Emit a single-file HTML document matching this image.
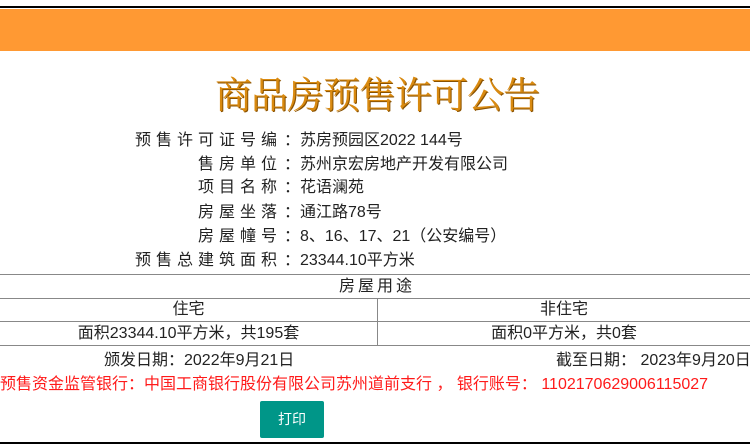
<!DOCTYPE html>
<html><head><meta charset="utf-8"><style>
body{margin:0;width:750px;height:447px;overflow:hidden;background:#fff;position:relative;font-family:"Liberation Sans","Noto Sans CJK SC",sans-serif;color:#222;}
.a{position:absolute;white-space:nowrap;}
.lbl{position:absolute;right:468px;font-size:16px;letter-spacing:5px;white-space:nowrap;line-height:20px;}
.val{position:absolute;left:284px;font-size:16px;white-space:nowrap;line-height:20px;}
.hl{position:absolute;left:0;width:750px;height:1px;background:#888;}
</style></head><body>
<div class="a" style="top:6px;left:0;width:750px;height:2px;background:#000"></div>
<div class="a" style="top:9px;left:0;width:750px;height:42px;background:#ff9933"></div>
<div class="a" style="top:68px;left:0;width:754px;text-align:center;font-family:'Noto Serif CJK SC',serif;font-size:37px;line-height:48px;color:#d98a10;text-shadow:1px 1px 0 #8a5200;letter-spacing:-1px">商品房预售许可公告</div>

<div class="lbl" style="top:131px">预售许可证号编</div><div class="val" style="top:131px">：苏房预园区2022 144号</div>
<div class="lbl" style="top:155px">售房单位</div><div class="val" style="top:155px">：苏州京宏房地产开发有限公司</div>
<div class="lbl" style="top:178px">项目名称</div><div class="val" style="top:178px">：花语澜苑</div>
<div class="lbl" style="top:203px">房屋坐落</div><div class="val" style="top:203px">：通江路78号</div>
<div class="lbl" style="top:227px">房屋幢号</div><div class="val" style="top:227px">：8、16、17、21（公安编号）</div>
<div class="lbl" style="top:251px">预售总建筑面积</div><div class="val" style="top:251px">：23344.10平方米</div>

<div class="hl" style="top:274px"></div>
<div class="a" style="top:277px;left:0;width:754px;text-align:center;font-size:16px;letter-spacing:3px;line-height:20px">房屋用途</div>
<div class="hl" style="top:298px"></div>
<div class="a" style="top:300px;left:0;width:377px;text-align:center;font-size:16px;line-height:20px">住宅</div>
<div class="a" style="top:300px;left:378px;width:372px;text-align:center;font-size:16px;line-height:20px">非住宅</div>
<div class="hl" style="top:321px"></div>
<div class="a" style="top:324px;left:0;width:377px;text-align:center;font-size:16px;line-height:20px">面积23344.10平方米，共195套</div>
<div class="a" style="top:324px;left:378px;width:372px;text-align:center;font-size:16px;line-height:20px">面积0平方米，共0套</div>
<div class="hl" style="top:345px"></div>
<div class="a" style="top:298px;left:377px;width:1px;height:47px;background:#888"></div>

<div class="a" style="top:351px;left:104px;font-size:16px;line-height:20px">颁发日期：2022年9月21日</div>
<div class="a" style="top:351px;left:556px;font-size:16px;line-height:20px">截至日期： 2023年9月20日</div>
<div class="a" style="top:375px;left:0;font-size:16px;line-height:20px;color:#ff1a1a">预售资金监管银行：中国工商银行股份有限公司苏州道前支行 ， 银行账号： 1102170629006115027</div>
<div class="a" style="top:401px;left:260px;width:64px;height:37px;background:#009688;border-radius:2px;color:#fff;font-size:14px;line-height:37px;text-align:center">打印</div>
<div class="a" style="top:442px;left:0;width:750px;height:2px;background:#000"></div>
</body></html>
